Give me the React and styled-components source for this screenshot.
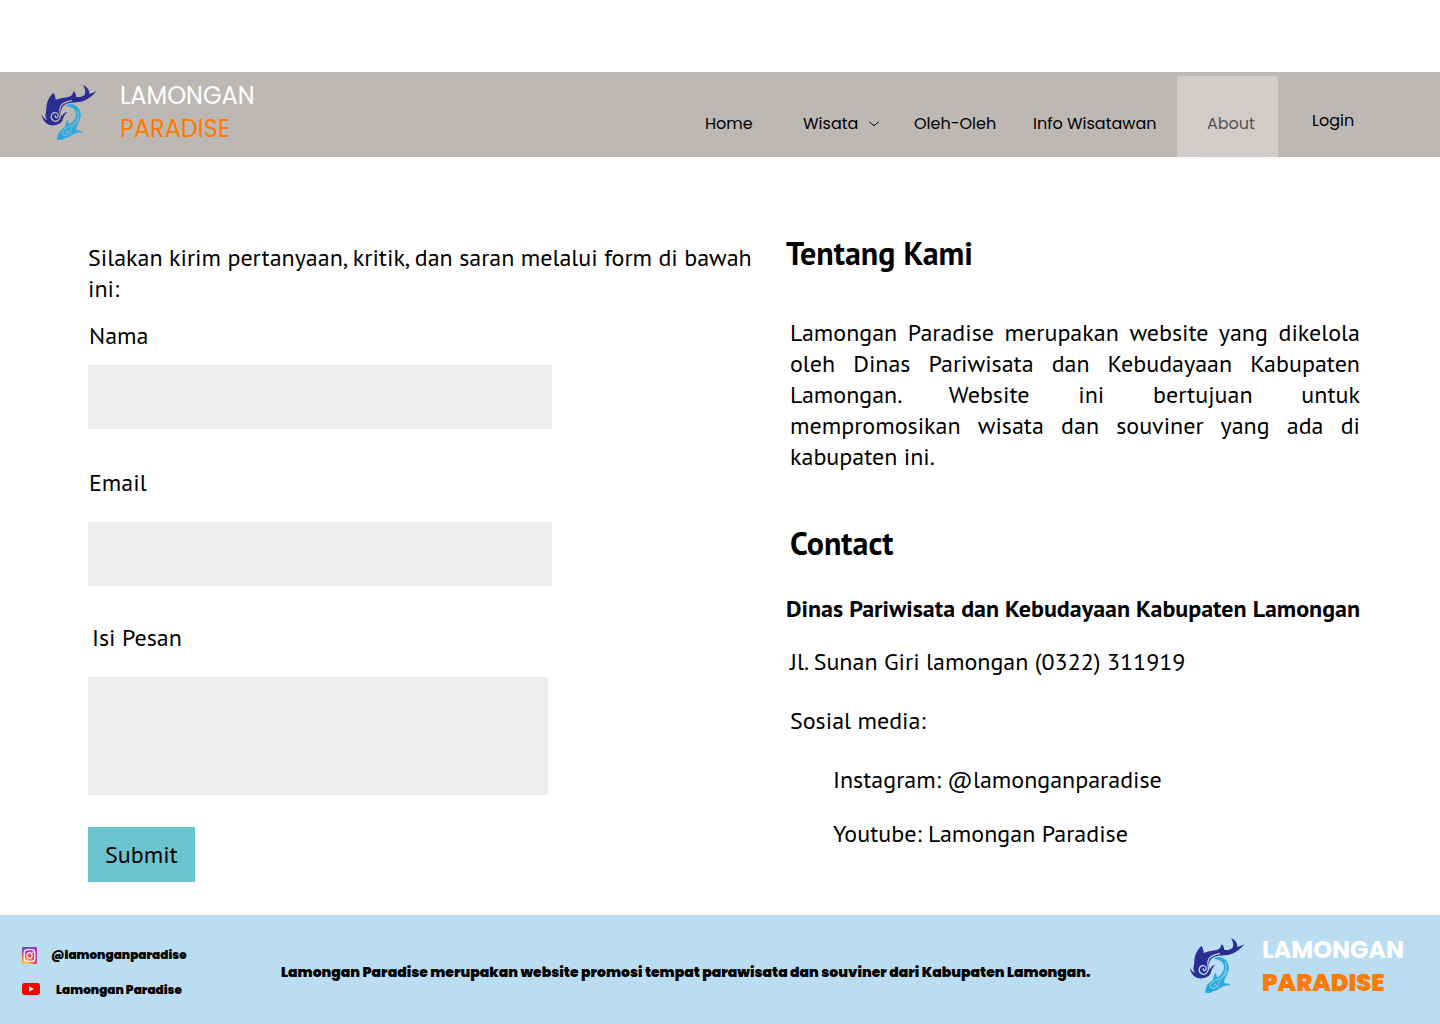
import React from "react";
import styled, { createGlobalStyle, css } from "styled-components";

const GlobalStyle = createGlobalStyle`
  *, *::before, *::after { box-sizing: border-box; }
  body { margin: 0; background: #fff; color: #000; }
`;

const poppins = css`
  font-family: Poppins, Inter, "Open Sans", sans-serif;
`;
const ptSans = css`
  font-family: "PT Sans", "Open Sans", "Noto Sans", sans-serif;
`;

const Page = styled.div`
  width: 1440px;
  height: 1024px;
  padding-top: 72px;
  display: flex;
  flex-direction: column;
  overflow: hidden;
`;

/* Header */
const Header = styled.header`
  ${poppins}
  flex: none;
  height: 85px;
  background: #beb8b4;
  display: flex;
  justify-content: space-between;
`;

const Brand = styled.div`
  display: flex;
  align-items: flex-start;
  padding: ${(p) => p.$top}px 0 0 ${(p) => p.$left}px;
`;

const BrandName = styled.div`
  display: flex;
  flex-direction: column;
  margin: ${(p) => p.$top}px 0 0 ${(p) => p.$left}px;
  font-size: 24px;
  font-weight: ${(p) => p.$weight};
  line-height: 33px;
  white-space: nowrap;
`;

const BrandTop = styled.span`
  color: #fff;
`;

const BrandBottom = styled.span`
  color: #ff7a00;
  font-weight: ${(p) => p.$weight};
`;

const Nav = styled.nav`
  display: flex;
  align-items: stretch;
  padding-right: 62px;
  font-size: 16px;
`;

const NavLink = styled.a`
  display: flex;
  gap: 10px;
  width: ${(p) => p.$width}px;
  padding-top: 40px;
  line-height: 24px;
  white-space: nowrap;
`;

const ActiveLink = styled(NavLink)`
  margin-top: 4px;
  padding: 36px 0 0 30px;
  background: #d1ccc9;
  color: #555453;
`;

const LoginLink = styled(NavLink)`
  padding: 37px 0 0 34px;
`;

const Chevron = styled.svg`
  width: 12px;
  height: 6px;
  margin-top: 9px;
`;

/* Content */
const Main = styled.main`
  ${ptSans}
  flex: 1;
  display: flex;
  padding-left: 88px;
  font-size: 24px;
  line-height: 31px;
`;

const FormColumn = styled.form`
  width: 698px;
  padding-top: 85px;
`;

const Intro = styled.p`
  margin: 0 0 16px;
`;

const Field = styled.label`
  display: flex;
  flex-direction: column;
  gap: ${(p) => p.$gap}px;
  margin-bottom: ${(p) => p.$after}px;
`;

const FieldName = styled.span`
  padding-left: ${(p) => p.$indent}px;
`;

const Input = styled.input`
  display: block;
  width: 464px;
  height: 64px;
  border: 0;
  padding: 0 16px;
  background: #eee;
  font: inherit;
`;

const TextArea = styled.textarea`
  display: block;
  width: 460px;
  height: 118px;
  border: 0;
  padding: 16px;
  background: #eee;
  font: inherit;
  resize: none;
`;

const Submit = styled.button`
  display: flex;
  align-items: center;
  width: 107px;
  height: 55px;
  padding: 0 0 0 17px;
  border: 0;
  background: #6cc4d0;
  color: #000;
  font: inherit;
`;

const InfoColumn = styled.section`
  width: 574px;
  padding-top: 76px;
`;

const Heading = styled.h2`
  margin: 0 0 ${(p) => p.$after}px ${(p) => p.$indent}px;
  font-size: 32px;
  line-height: 41px;
  font-weight: 700;
`;

const Lead = styled.p`
  margin: 0 0 51px 4px;
`;

const Line = styled.span`
  display: block;
  white-space: nowrap;
  text-align: justify;
  text-align-last: ${(p) => (p.$last ? "left" : "justify")};
`;

const Office = styled.h3`
  margin: 0 0 22px;
  font-size: 24px;
  font-weight: 700;
  white-space: nowrap;
`;

const Detail = styled.p`
  margin: 0 0 ${(p) => p.$after}px ${(p) => p.$indent}px;
  white-space: nowrap;
`;

/* Footer */
const Footer = styled.footer`
  ${poppins}
  flex: none;
  height: 109px;
  background: #bbddf1;
  display: flex;
  font-weight: 900;
`;

const Socials = styled.div`
  width: 281px;
  padding: 30px 0 0 22px;
  display: flex;
  flex-direction: column;
  gap: 15px;
  font-size: 12px;
`;

const Social = styled.div`
  display: flex;
  align-items: center;
  gap: ${(p) => p.$gap}px;
  height: 20px;
  line-height: 20px;
  white-space: nowrap;
`;

const Tagline = styled.p`
  width: 868px;
  margin: 47px 0 0;
  font-size: 14px;
  line-height: 21px;
  white-space: nowrap;
`;

const LogoSvg = styled.svg`
  flex: none;
  width: 80px;
  height: 80px;
`;

function Logo({ ground }) {
  return (
    <LogoSvg viewBox="0 0 240 240" fill="none" strokeLinecap="round">
      <path
        fill="#2b2e91"
        d="M70 62C61 72 54 82 51 94C48 105 50 114 47 124C45 132 47 138 51 144C45 142 39 136 35 126C37 143 47 158 64 160C78 161 90 157 97 147C101 137 102 128 112 121C103 121 98 127 96 134C92 126 91 113 99 103C108 93 123 92 140 91C166 89 184 76 200 56C192 61 186 64 178 65C178 53 171 44 159 39C166 52 168 61 163 69C155 76 146 76 138 74C139 68 137 62 130 57C130 67 123 74 112 76C99 78 88 79 77 84C77 77 75 69 70 62Z"
      />
      <path
        stroke={ground}
        strokeWidth="3.8"
        d="M124 86C103 90 92 98 90 108C88 118 92 126 91 134C89 145 79 151 70 146C60 140 62 125 73 122C83 120 88 130 82 136C78 139 74 135 76 131"
      />
      <path
        fill="#27a9e1"
        d="M107 101C114 95 130 95 139 102C151 111 156 128 150 142C145 155 138 165 138 174C146 176 154 175 160 181C150 181 140 182 132 185C121 195 106 198 97 203C91 205 84 204 81 202C83 184 91 173 104 166C108 158 105 151 113 143C115 149 115 153 118 157C132 148 141 134 137 119C133 107 120 103 107 101Z"
      />
      <path
        stroke={ground}
        strokeWidth="2.6"
        d="M142 114C151 140 133 158 117 164C104 169 95 176 98 186C102 193 115 191 116 182C115 175 107 177 108 182"
      />
      <path stroke={ground} strokeWidth="2.2" d="M147 138C143 152 130 162 123 170C120 175 126 180 120 188" />
    </LogoSvg>
  );
}

const InstagramSvg = styled.svg`
  flex: none;
  width: 15px;
  height: 17px;
`;

function InstagramIcon() {
  return (
    <InstagramSvg viewBox="0 0 15 17" preserveAspectRatio="none">
      <defs>
        <linearGradient id="igBase" x1="0" y1="0" x2="1" y2="0.25">
          <stop offset="0" stopColor="#5a55d8" />
          <stop offset="1" stopColor="#b52bb8" />
        </linearGradient>
        <radialGradient id="igGlow" cx="0.25" cy="1.05" r="1">
          <stop offset="0" stopColor="#ffd65a" />
          <stop offset="0.25" stopColor="#ffb04c" />
          <stop offset="0.55" stopColor="#fa5245" />
          <stop offset="1" stopColor="#d6309a" stopOpacity="0" />
        </radialGradient>
      </defs>
      <rect width="15" height="17" rx="1" fill="url(#igBase)" />
      <rect width="15" height="17" rx="1" fill="url(#igGlow)" />
      <g fill="none" stroke="#fff" strokeWidth="1.2">
        <rect x="2.2" y="2.6" width="10.6" height="11.8" rx="3" />
        <ellipse cx="7.5" cy="8.5" rx="2.6" ry="2.9" />
      </g>
      <circle cx="10.7" cy="5.2" r="0.8" fill="#fff" />
    </InstagramSvg>
  );
}

const YoutubeSvg = styled.svg`
  flex: none;
  width: 18px;
  height: 12px;
  margin-top: -2px;
`;

function YoutubeIcon() {
  return (
    <YoutubeSvg viewBox="0 0 18 12">
      <rect width="18" height="12" rx="2.4" fill="#f00" />
      <path d="M7 3.2L12 6L7 8.8Z" fill="#fff" />
    </YoutubeSvg>
  );
}

export default function App() {
  return (
    <Page>
      <GlobalStyle />
      <Header>
        <Brand $left={30} $top={0}>
          <Logo ground="#beb8b4" />
          <BrandName $left={10} $top={7} $weight={400}>
            <BrandTop>LAMONGAN</BrandTop>
            <BrandBottom $weight={400}>PARADISE</BrandBottom>
          </BrandName>
        </Brand>
        <Nav>
          <NavLink $width={98}>Home</NavLink>
          <NavLink $width={111}>
            Wisata
            <Chevron viewBox="0 0 12 6" fill="none" stroke="#000" strokeLinecap="round">
              <path d="M1.500 1C3 2.300 4.500 3.500 6 4.700C7.500 3.500 9 2.300 10.500 1" />
            </Chevron>
          </NavLink>
          <NavLink $width={119}>Oleh-Oleh</NavLink>
          <NavLink $width={144}>Info Wisatawan</NavLink>
          <ActiveLink $width={101}>About</ActiveLink>
          <LoginLink $width={100}>Login</LoginLink>
        </Nav>
      </Header>

      <Main>
        <FormColumn>
          <Intro>
            Silakan kirim pertanyaan, kritik, dan saran melalui form di bawah
            <br />
            ini:
          </Intro>
          <Field $gap={14} $after={38}>
            <FieldName $indent={1}>Nama</FieldName>
            <Input type="text" />
          </Field>
          <Field $gap={24} $after={36}>
            <FieldName $indent={1}>Email</FieldName>
            <Input type="email" />
          </Field>
          <Field $gap={24} $after={32}>
            <FieldName $indent={4}>Isi Pesan</FieldName>
            <TextArea />
          </Field>
          <Submit type="button">Submit</Submit>
        </FormColumn>

        <InfoColumn>
          <Heading $indent={0} $after={43}>Tentang Kami</Heading>
          <Lead>
            <Line>Lamongan Paradise merupakan website yang dikelola</Line>
            <Line>oleh Dinas Pariwisata dan Kebudayaan Kabupaten</Line>
            <Line>Lamongan. Website ini bertujuan untuk</Line>
            <Line>mempromosikan wisata dan souviner yang ada di</Line>
            <Line $last>kabupaten ini.</Line>
          </Lead>
          <Heading $indent={4} $after={29}>Contact</Heading>
          <Office>Dinas Pariwisata dan Kebudayaan Kabupaten Lamongan</Office>
          <Detail $indent={4} $after={28}>Jl. Sunan Giri lamongan (0322) 311919</Detail>
          <Detail $indent={4} $after={28}>Sosial media:</Detail>
          <Detail $indent={47} $after={23}>Instagram: @lamonganparadise</Detail>
          <Detail $indent={47} $after={0}>Youtube: Lamongan Paradise</Detail>
        </InfoColumn>
      </Main>

      <Footer>
        <Socials>
          <Social $gap={14}>
            <InstagramIcon />
            @lamonganparadise
          </Social>
          <Social $gap={16}>
            <YoutubeIcon />
            Lamongan Paradise
          </Social>
        </Socials>
        <Tagline>
          Lamongan Paradise merupakan website promosi tempat parawisata dan souviner dari Kabupaten Lamongan.
        </Tagline>
        <Brand $left={29} $top={10}>
          <Logo ground="#bbddf1" />
          <BrandName $left={4} $top={8} $weight={700}>
            <BrandTop>LAMONGAN</BrandTop>
            <BrandBottom $weight={900}>PARADISE</BrandBottom>
          </BrandName>
        </Brand>
      </Footer>
    </Page>
  );
}
